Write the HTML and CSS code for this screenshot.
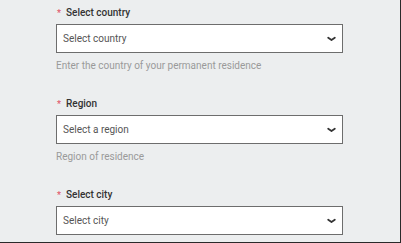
FILE: index.html
```html
<!DOCTYPE html>
<html>
<head>
<meta charset="utf-8">
<link rel="stylesheet" href="styles.css">
</head>
<body>
<div class="frame">
  <form class="form">
    <div class="field">
      <label class="label"><span class="req">*</span>Select country</label>
      <div class="select"><span class="value">Select country</span><svg class="chev" width="9" height="6" viewBox="0 0 9 6"><path d="M1.2 1.8 L4.5 4 L7.8 1.8" fill="none" stroke="#333" stroke-width="1.8" stroke-linecap="round" stroke-linejoin="round"/></svg></div>
      <div class="help">Enter the country of your permanent residence</div>
    </div>
    <div class="field">
      <label class="label"><span class="req">*</span>Region</label>
      <div class="select"><span class="value">Select a region</span><svg class="chev" width="9" height="6" viewBox="0 0 9 6"><path d="M1.2 1.8 L4.5 4 L7.8 1.8" fill="none" stroke="#333" stroke-width="1.8" stroke-linecap="round" stroke-linejoin="round"/></svg></div>
      <div class="help">Region of residence</div>
    </div>
    <div class="field">
      <label class="label"><span class="req">*</span>Select city</label>
      <div class="select"><span class="value">Select city</span><svg class="chev" width="9" height="6" viewBox="0 0 9 6"><path d="M1.2 1.8 L4.5 4 L7.8 1.8" fill="none" stroke="#333" stroke-width="1.8" stroke-linecap="round" stroke-linejoin="round"/></svg></div>
    </div>
  </form>
</div>
</body>
</html>
```
FILE: styles.css
```css
html, body {
  margin: 0;
  padding: 0;
}
body {
  background: #eceeef;
  font-family: Roboto, "Liberation Sans", sans-serif;
}
.frame {
  box-sizing: border-box;
  width: 401px;
  height: 243px;
  border-right: 1px solid #2a2a2a;
  border-bottom: 1px solid #2a2a2a;
  overflow: hidden;
}
.form {
  display: flex;
  flex-direction: column;
  gap: 21px;
  padding: 4px 0 0 56px;
  width: 287px;
}
.field {
  display: flex;
  flex-direction: column;
}
.label {
  font-size: 10px;
  font-weight: 500;
  color: #333;
  line-height: 18px;
  margin-bottom: 2px;
}
.req {
  color: #e0566b;
  margin: 0 5px 0 1px;
  font-size: 9px;
}
.select {
  box-sizing: border-box;
  height: 29px;
  background: #fff;
  border: 1px solid #6d6d6d;
  display: flex;
  align-items: center;
  justify-content: space-between;
  padding: 0 6px 0 6px;
}
.value {
  font-size: 10px;
  color: #555;
}
.chev {
  display: block;
  margin-top: 1px;
}
.help {
  margin-top: 5px;
  font-size: 10px;
  color: #9a9a9a;
  line-height: 16px;
}
```
